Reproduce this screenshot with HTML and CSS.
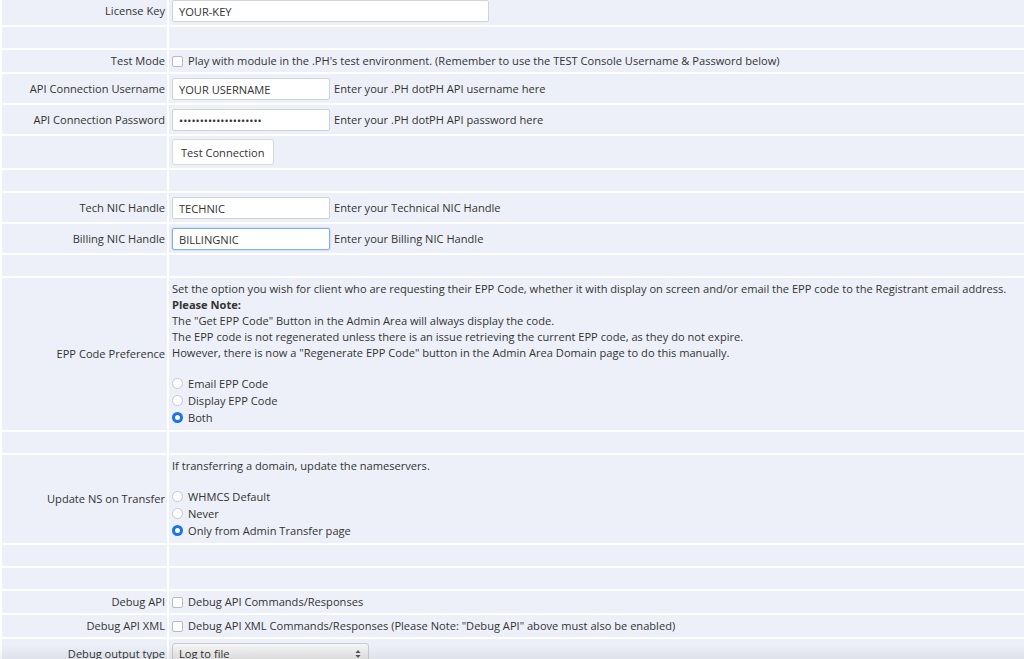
FILE: index.html
```html
<!DOCTYPE html>
<html>
<head>
<meta charset="utf-8">
<link rel="stylesheet" href="styles.css">
</head>
<body>
<table class="settings">
  <tr class="row-input">
    <td class="label">License Key</td>
    <td class="field"><input class="text wide" type="text" value="YOUR-KEY"></td>
  </tr>
  <tr class="row-empty"><td class="label"></td><td class="field"></td></tr>
  <tr>
    <td class="label">Test Mode</td>
    <td class="field"><label class="check"><span class="box"></span>Play with module in the .PH's test environment. (Remember to use the TEST Console Username &amp; Password below)</label></td>
  </tr>
  <tr class="row-input">
    <td class="label">API Connection Username</td>
    <td class="field"><input class="text" type="text" value="YOUR USERNAME"><span class="hint">Enter your .PH dotPH API username here</span></td>
  </tr>
  <tr class="row-input">
    <td class="label">API Connection Password</td>
    <td class="field"><input class="text pw" type="text" value="••••••••••••••••••••"><span class="hint">Enter your .PH dotPH API password here</span></td>
  </tr>
  <tr class="row-btn">
    <td class="label"></td>
    <td class="field"><button class="btn" type="button">Test Connection</button></td>
  </tr>
  <tr class="row-empty"><td class="label"></td><td class="field"></td></tr>
  <tr class="row-input">
    <td class="label">Tech NIC Handle</td>
    <td class="field"><input class="text" type="text" value="TECHNIC"><span class="hint">Enter your Technical NIC Handle</span></td>
  </tr>
  <tr class="row-input">
    <td class="label">Billing NIC Handle</td>
    <td class="field"><input class="text focus" type="text" value="BILLINGNIC"><span class="hint">Enter your Billing NIC Handle</span></td>
  </tr>
  <tr class="row-empty"><td class="label"></td><td class="field"></td></tr>
  <tr class="row-block">
    <td class="label">EPP Code Preference</td>
    <td class="field">
      <div class="desc">Set the option you wish for client who are requesting their EPP Code, whether it with display on screen and/or email the EPP code to the Registrant email address.<br><b>Please Note:</b><br>The "Get EPP Code" Button in the Admin Area will always display the code.<br>The EPP code is not regenerated unless there is an issue retrieving the current EPP code, as they do not expire.<br>However, there is now a "Regenerate EPP Code" button in the Admin Area Domain page to do this manually.</div>
      <div class="radios">
        <label class="radio"><span class="dot"></span>Email EPP Code</label>
        <label class="radio"><span class="dot"></span>Display EPP Code</label>
        <label class="radio"><span class="dot on"></span>Both</label>
      </div>
    </td>
  </tr>
  <tr class="row-empty"><td class="label"></td><td class="field"></td></tr>
  <tr class="row-block">
    <td class="label">Update NS on Transfer</td>
    <td class="field">
      <div class="desc">If transferring a domain, update the nameservers.</div>
      <div class="radios">
        <label class="radio"><span class="dot"></span>WHMCS Default</label>
        <label class="radio"><span class="dot"></span>Never</label>
        <label class="radio"><span class="dot on"></span>Only from Admin Transfer page</label>
      </div>
    </td>
  </tr>
  <tr class="row-empty"><td class="label"></td><td class="field"></td></tr>
  <tr class="row-empty"><td class="label"></td><td class="field"></td></tr>
  <tr>
    <td class="label">Debug API</td>
    <td class="field"><label class="check"><span class="box"></span>Debug API Commands/Responses</label></td>
  </tr>
  <tr>
    <td class="label">Debug API XML</td>
    <td class="field"><label class="check"><span class="box"></span>Debug API XML Commands/Responses (Please Note: "Debug API" above must also be enabled)</label></td>
  </tr>
  <tr class="row-input">
    <td class="label">Debug output type</td>
    <td class="field"><div class="select"><span>Log to file</span><svg class="arrows" width="6" height="10" viewBox="0 0 6 10"><path d="M0.5 4 L3 1 L5.5 4 Z M0.5 6 L3 9 L5.5 6 Z" fill="#555"/></svg></div></td>
  </tr>
</table>
<div class="fade"></div>
</body>
</html>
```

FILE: styles.css
```css
html, body {
  margin: 0;
  padding: 0;
  background: #ffffff;
  overflow: hidden;
  height: 659px;
}
body {
  font-family: "Open Sans", "Liberation Sans", sans-serif;
  font-size: 11.1px;
  color: #333333;
}
.settings {
  border-collapse: separate;
  border-spacing: 2px;
  width: calc(100% + 2px);
  margin-top: -6px;
}
.settings td {
  background: #edf0f8;
  padding: 3px 2px 3px 3px;
  line-height: 16px;
  vertical-align: middle;
}
.settings td.label {
  width: 160px;
  text-align: right;
  padding-right: 2px;
  white-space: nowrap;
}
.settings td.field {
  padding-left: 3px;
}
.row-empty td {
  height: 15px;
}
.row-input td {
  padding-top: 4px;
  padding-bottom: 3px;
}
.row-btn td {
  padding-top: 3px;
  padding-bottom: 3px;
}
.row-block td.field {
  padding-top: 3px;
  padding-bottom: 4px;
}
.text {
  box-sizing: border-box;
  height: 22px;
  width: 158px;
  border: 1px solid #cfd3da;
  border-radius: 2px;
  background: #fff;
  font-family: inherit;
  font-size: 11.1px;
  color: #333;
  padding: 0 6px;
  margin: 0;
  vertical-align: middle;
  outline: none;
}
.text.wide {
  width: 317px;
}
.text.pw {
  font-size: 11px;
  letter-spacing: 0px;
}
.text.focus {
  border-color: #7fb0ea;
  box-shadow: 0 0 2px rgba(80, 150, 230, 0.5);
}
.hint {
  margin-left: 4px;
  vertical-align: middle;
}
.btn {
  display: block;
  box-sizing: border-box;
  height: 26px;
  padding: 0 8px;
  background: #fff;
  border: 1px solid #d6d9de;
  border-radius: 3px;
  font-family: inherit;
  font-size: 11.1px;
  color: #333;
  margin: 0;
}
.check, .radio {
  display: flex;
  align-items: center;
  white-space: nowrap;
}
.box {
  box-sizing: border-box;
  width: 11px;
  height: 11px;
  border: 1px solid #b7bcc4;
  border-radius: 2px;
  background: #fff;
  margin: 0 5px 0 0;
  flex: none;
}
.desc {
  line-height: 16px;
  margin-bottom: 14px;
}
.radio {
  height: 17px;
}
.dot {
  box-sizing: border-box;
  width: 11px;
  height: 11px;
  border: 1px solid #c3c7ce;
  border-radius: 50%;
  background: #fff;
  margin-right: 5px;
  flex: none;
}
.dot.on {
  border: 3px solid #1a73e8;
  background: #fff;
}
.select {
  box-sizing: border-box;
  display: flex;
  align-items: center;
  justify-content: space-between;
  width: 197px;
  height: 22px;
  padding: 0 7px 0 6px;
  border: 1px solid #c9ccd1;
  border-radius: 3px;
  background: linear-gradient(#f6f6f6, #e4e4e4);
}
.fade {
  position: fixed;
  left: 0;
  right: 0;
  bottom: 0;
  height: 14px;
  background: linear-gradient(rgba(0,0,0,0), rgba(0,0,0,0.06));
  pointer-events: none;
}
```
